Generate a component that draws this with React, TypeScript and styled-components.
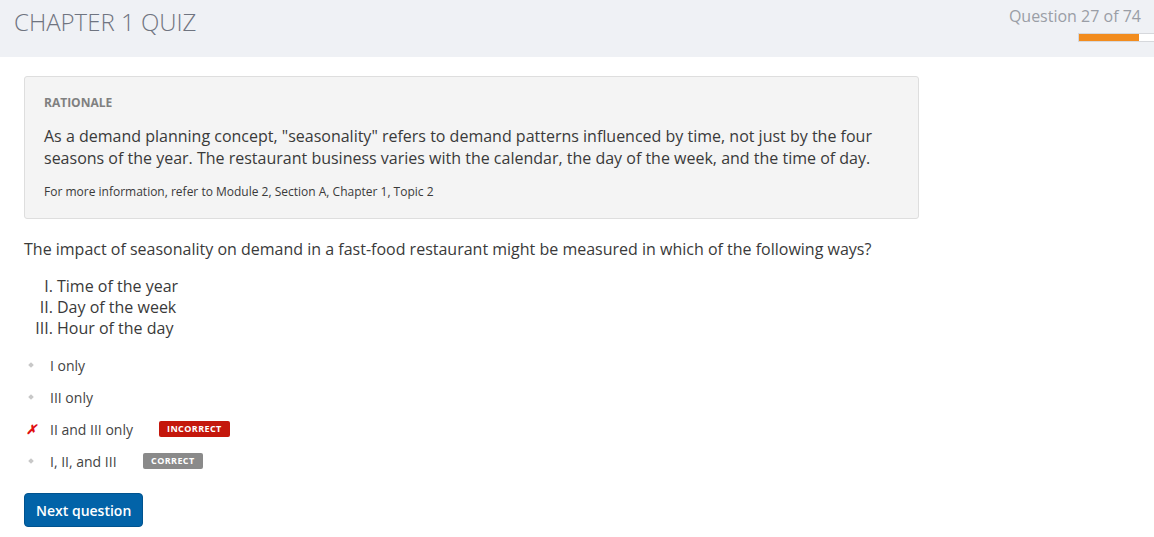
import React from "react";
import styled, { createGlobalStyle } from "styled-components";

const Global = createGlobalStyle`
  html, body { margin: 0; padding: 0; background: #fff; }
  body { font-family: "Open Sans", "Liberation Sans", sans-serif; color: #333; }
`;

const Header = styled.header`
  height: 57px;
  background: #eff1f5;
  display: flex;
  justify-content: space-between;
  align-items: flex-start;
  padding: 0 0 0 14px;
`;

const Title = styled.h1`
  margin: 5px 0 0;
  font-weight: 300;
  font-size: 24px;
  letter-spacing: 0;
  color: #6f7480;
`;

const Progress = styled.div`
  display: flex;
  flex-direction: column;
  align-items: flex-end;
  padding-top: 6px;
`;

const ProgressLabel = styled.div`
  font-size: 16px;
  color: #9a9ea6;
  margin-right: 13px;
  line-height: 20px;
`;

const Bar = styled.div`
  margin-top: 7px;
  width: 76px;
  height: 9px;
  box-sizing: border-box;
  border: 1px solid #d6d8dc;
  border-right: none;
  background: #fff;
  display: flex;
`;

const Fill = styled.div`
  background: #f28c1e;
  height: 100%;
`;

const Main = styled.main`
  padding: 19px 24px 0;
`;

const Rationale = styled.section`
  width: 895px;
  box-sizing: border-box;
  background: #f4f4f4;
  border: 1px solid #dedede;
  border-radius: 3px;
  padding: 18px 19px 18px;
`;

const RTitle = styled.div`
  font-size: 12px;
  font-weight: 700;
  color: #808080;
  line-height: 16px;
`;

const RBody = styled.p`
  margin: 14px 0 0;
  font-size: 16px;
  line-height: 22px;
  color: #3a3a3a;
`;

const RNote = styled.p`
  margin: 15px 0 0;
  font-size: 12px;
  line-height: 16px;
  color: #3a3a3a;
`;

const Question = styled.p`
  margin: 19px 0 0;
  font-size: 16px;
  line-height: 22px;
  color: #3a3a3a;
`;

const Roman = styled.ol`
  list-style: upper-roman;
  margin: 16px 0 0;
  padding-left: 33px;
  font-size: 16px;
  line-height: 21px;
  color: #3a3a3a;
`;

const Options = styled.ul`
  list-style: none;
  margin: 10px 0 0;
  padding: 0;
`;

const Option = styled.li`
  display: flex;
  align-items: center;
  height: 32px;
  font-size: 14px;
  color: #444;
`;

const Marker = styled.span`
  width: 26px;
  display: flex;
  align-items: center;
  padding-left: 2px;
  box-sizing: border-box;
`;

const Dot = styled.span`
  width: 4px;
  height: 4px;
  margin-left: 3px;
  background: #c8c8c8;
  transform: rotate(45deg);
`;

const Cross = styled.span`
  color: #e01010;
  font-size: 13px;
  font-weight: 700;
  font-style: italic;
  line-height: 1;
`;

const OptText = styled.span<{ $w: number }>`
  min-width: ${(p) => p.$w}px;
`;

const Badge = styled.span<{ $bg: string }>`
  background: ${(p) => p.$bg};
  color: #fff;
  font-size: 9px;
  font-weight: 700;
  letter-spacing: 0.4px;
  padding: 0 8px;
  height: 16px;
  line-height: 16px;
  border-radius: 2px;
`;

const NextButton = styled.button`
  margin-top: 16px;
  background: #0263a8;
  color: #fff;
  border: 1px solid #00538f;
  border-radius: 4px;
  font-family: "Open Sans", "Liberation Sans", sans-serif;
  font-size: 14px;
  font-weight: 600;
  height: 34px;
  padding: 0 11px;
  cursor: pointer;
`;

export default function App() {
  return (
    <>
      <Global />
      <Header>
        <Title>CHAPTER 1 QUIZ</Title>
        <Progress>
          <ProgressLabel>Question 27 of 74</ProgressLabel>
          <Bar>
            <Fill style={{ width: `${(27 / 74) * 100 * 2.2}%` }} />
          </Bar>
        </Progress>
      </Header>
      <Main>
        <Rationale>
          <RTitle>RATIONALE</RTitle>
          <RBody>
            As a demand planning concept, "seasonality" refers to demand patterns influenced by time, not just by the four seasons of the year. The restaurant business varies with the calendar, the day of the week, and the time of day.
          </RBody>
          <RNote>For more information, refer to Module 2, Section A, Chapter 1, Topic 2</RNote>
        </Rationale>
        <Question>
          The impact of seasonality on demand in a fast-food restaurant might be measured in which of the following ways?
        </Question>
        <Roman>
          <li>Time of the year</li>
          <li>Day of the week</li>
          <li>Hour of the day</li>
        </Roman>
        <Options>
          <Option>
            <Marker><Dot /></Marker>
            <OptText $w={0}>I only</OptText>
          </Option>
          <Option>
            <Marker><Dot /></Marker>
            <OptText $w={0}>III only</OptText>
          </Option>
          <Option>
            <Marker><Cross>✗</Cross></Marker>
            <OptText $w={109}>II and III only</OptText>
            <Badge $bg="#c4170c">INCORRECT</Badge>
          </Option>
          <Option>
            <Marker><Dot /></Marker>
            <OptText $w={93}>I, II, and III</OptText>
            <Badge $bg="#8a8a8a">CORRECT</Badge>
          </Option>
        </Options>
        <NextButton>Next question</NextButton>
      </Main>
    </>
  );
}
